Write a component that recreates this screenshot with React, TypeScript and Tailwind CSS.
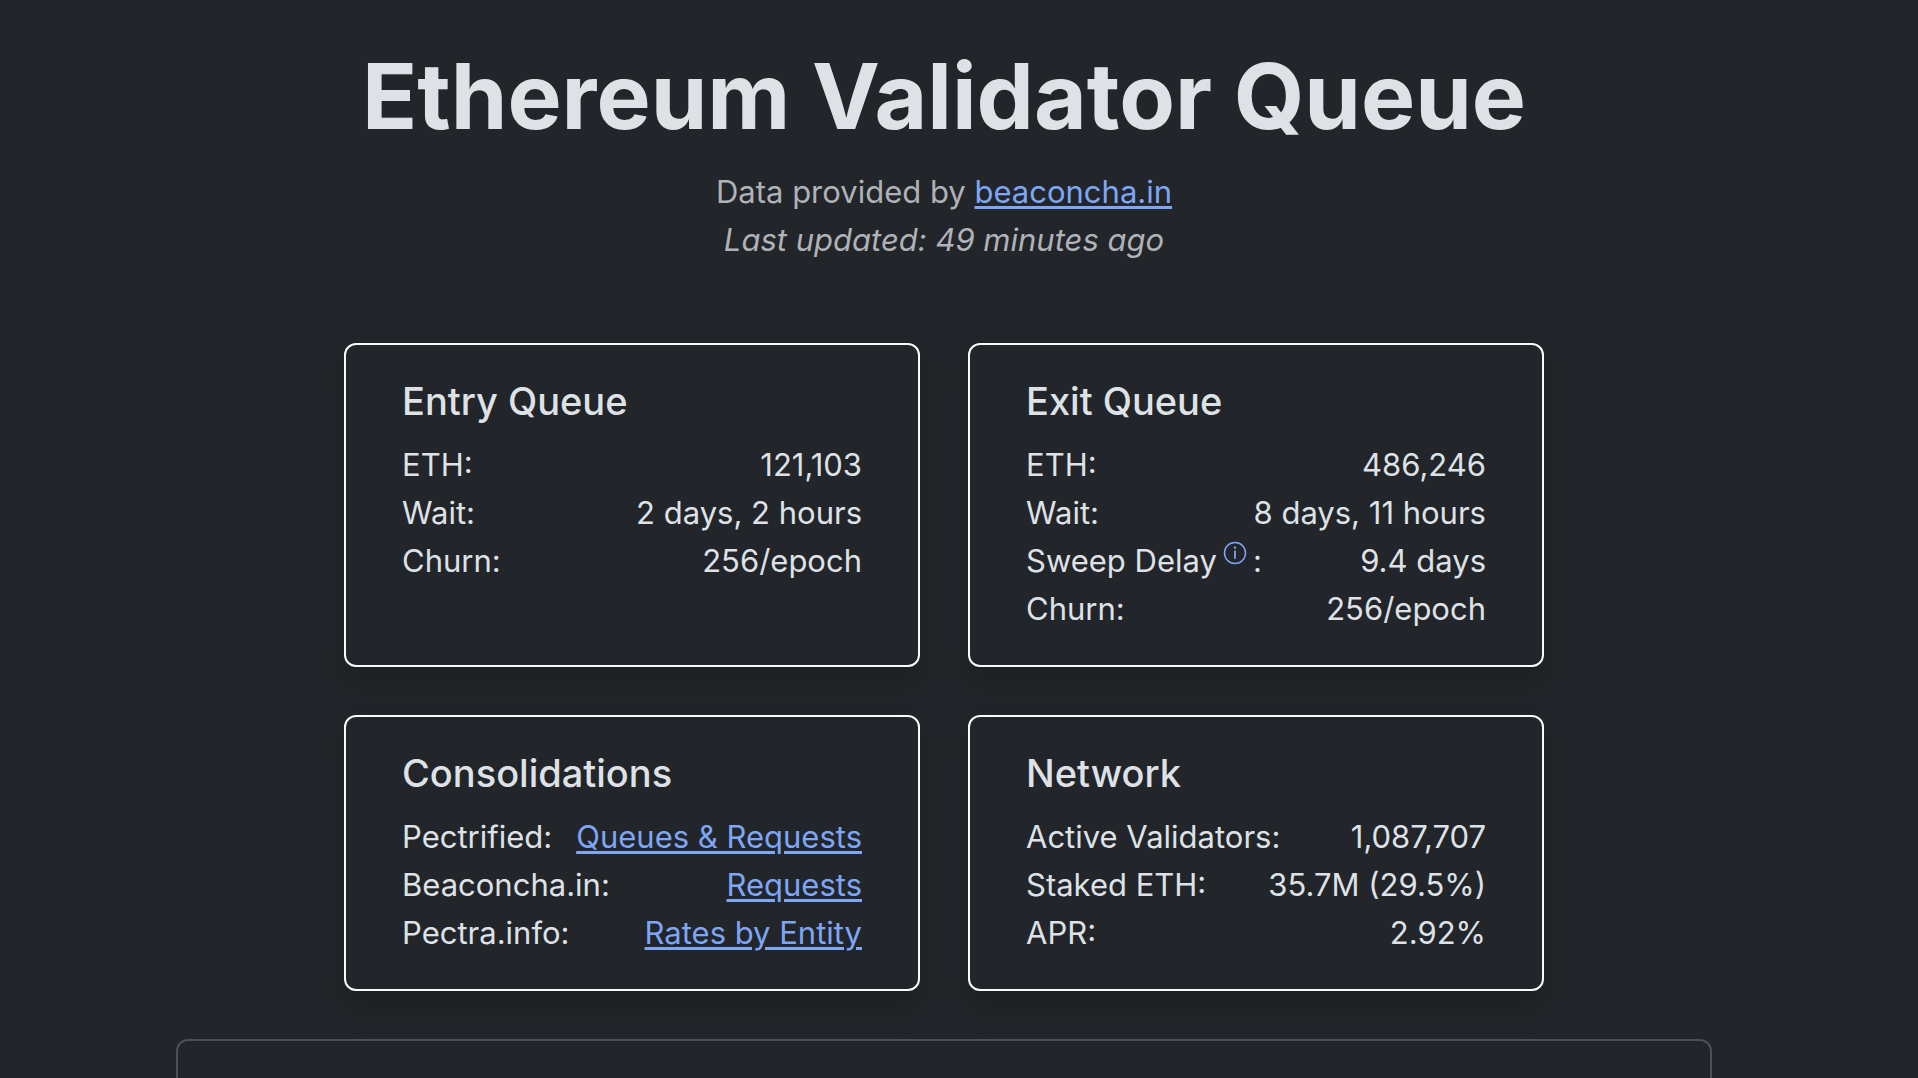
import type { ReactNode } from "react";

type Row = { label: ReactNode; value: ReactNode };

function TextLink({ href, children }: { href: string; children: ReactNode }) {
  return (
    <a href={href} className="text-[#7ea6f4] underline decoration-[3px] underline-offset-[3px]">
      {children}
    </a>
  );
}

function InfoLink() {
  return (
    <a href="#sweep-delay" aria-label="About sweep delay" className="mx-1.5 mb-4 text-[#7ea6f4]">
      <svg viewBox="0 0 24 24" className="size-6" fill="none" stroke="currentColor">
        <circle cx="12" cy="12" r="10.5" strokeWidth="1.5" />
        <path d="M12 9.6v8.2" strokeWidth="1.8" />
        <circle cx="12" cy="6.6" r="1.2" fill="currentColor" stroke="none" />
      </svg>
    </a>
  );
}

function Card({ title, rows }: { title: string; rows: Row[] }) {
  return (
    <section className="rounded-xl border-2 border-[#f8f9fa] px-14 py-8 shadow-[0_16px_32px_rgba(0,0,0,0.15)]">
      <h2 className="mb-4 text-[38px] leading-12 font-medium">{title}</h2>
      <dl>
        {rows.map((row, i) => (
          <div key={i} className="flex justify-between whitespace-nowrap">
            <dt className="flex items-center">{row.label}</dt>
            <dd>{row.value}</dd>
          </div>
        ))}
      </dl>
    </section>
  );
}

const entry: Row[] = [
  { label: "ETH:", value: "121,103" },
  { label: "Wait:", value: "2 days, 2 hours" },
  { label: "Churn:", value: "256/epoch" },
];

const exit: Row[] = [
  { label: "ETH:", value: "486,246" },
  { label: "Wait:", value: "8 days, 11 hours" },
  { label: <>Sweep Delay<InfoLink />:</>, value: "9.4 days" },
  { label: "Churn:", value: "256/epoch" },
];

const consolidations: Row[] = [
  { label: "Pectrified:", value: <TextLink href="#pectrified">Queues &amp; Requests</TextLink> },
  { label: "Beaconcha.in:", value: <TextLink href="#beaconchain">Requests</TextLink> },
  { label: "Pectra.info:", value: <TextLink href="#pectra">Rates by Entity</TextLink> },
];

const network: Row[] = [
  { label: "Active Validators:", value: "1,087,707" },
  { label: "Staked ETH:", value: "35.7M (29.5%)" },
  { label: "APR:", value: "2.92%" },
];

export default function App() {
  return (
    <div className="h-screen overflow-hidden bg-[#222529] pr-[30px] font-['Inter',sans-serif] text-[31px] leading-12 text-[#dee2e6]">
      <header className="pt-10 text-center">
        <h1 className="mb-4 text-[91px] leading-28 font-bold">Ethereum Validator Queue</h1>
        <p className="text-[#afb2b6]">
          Data provided by <TextLink href="#beaconchain">beaconcha.in</TextLink>
        </p>
        <p className="text-[#afb2b6] italic">Last updated: 49 minutes ago</p>
      </header>

      <main className="mt-[79px]">
        <div className="mx-auto grid max-w-[1200px] grid-cols-2 gap-12">
          <Card title="Entry Queue" rows={entry} />
          <Card title="Exit Queue" rows={exit} />
          <Card title="Consolidations" rows={consolidations} />
          <Card title="Network" rows={network} />
        </div>
        <section className="mx-auto mt-12 h-96 max-w-[1536px] rounded-xl border-2 border-[#495057]" />
      </main>
    </div>
  );
}
